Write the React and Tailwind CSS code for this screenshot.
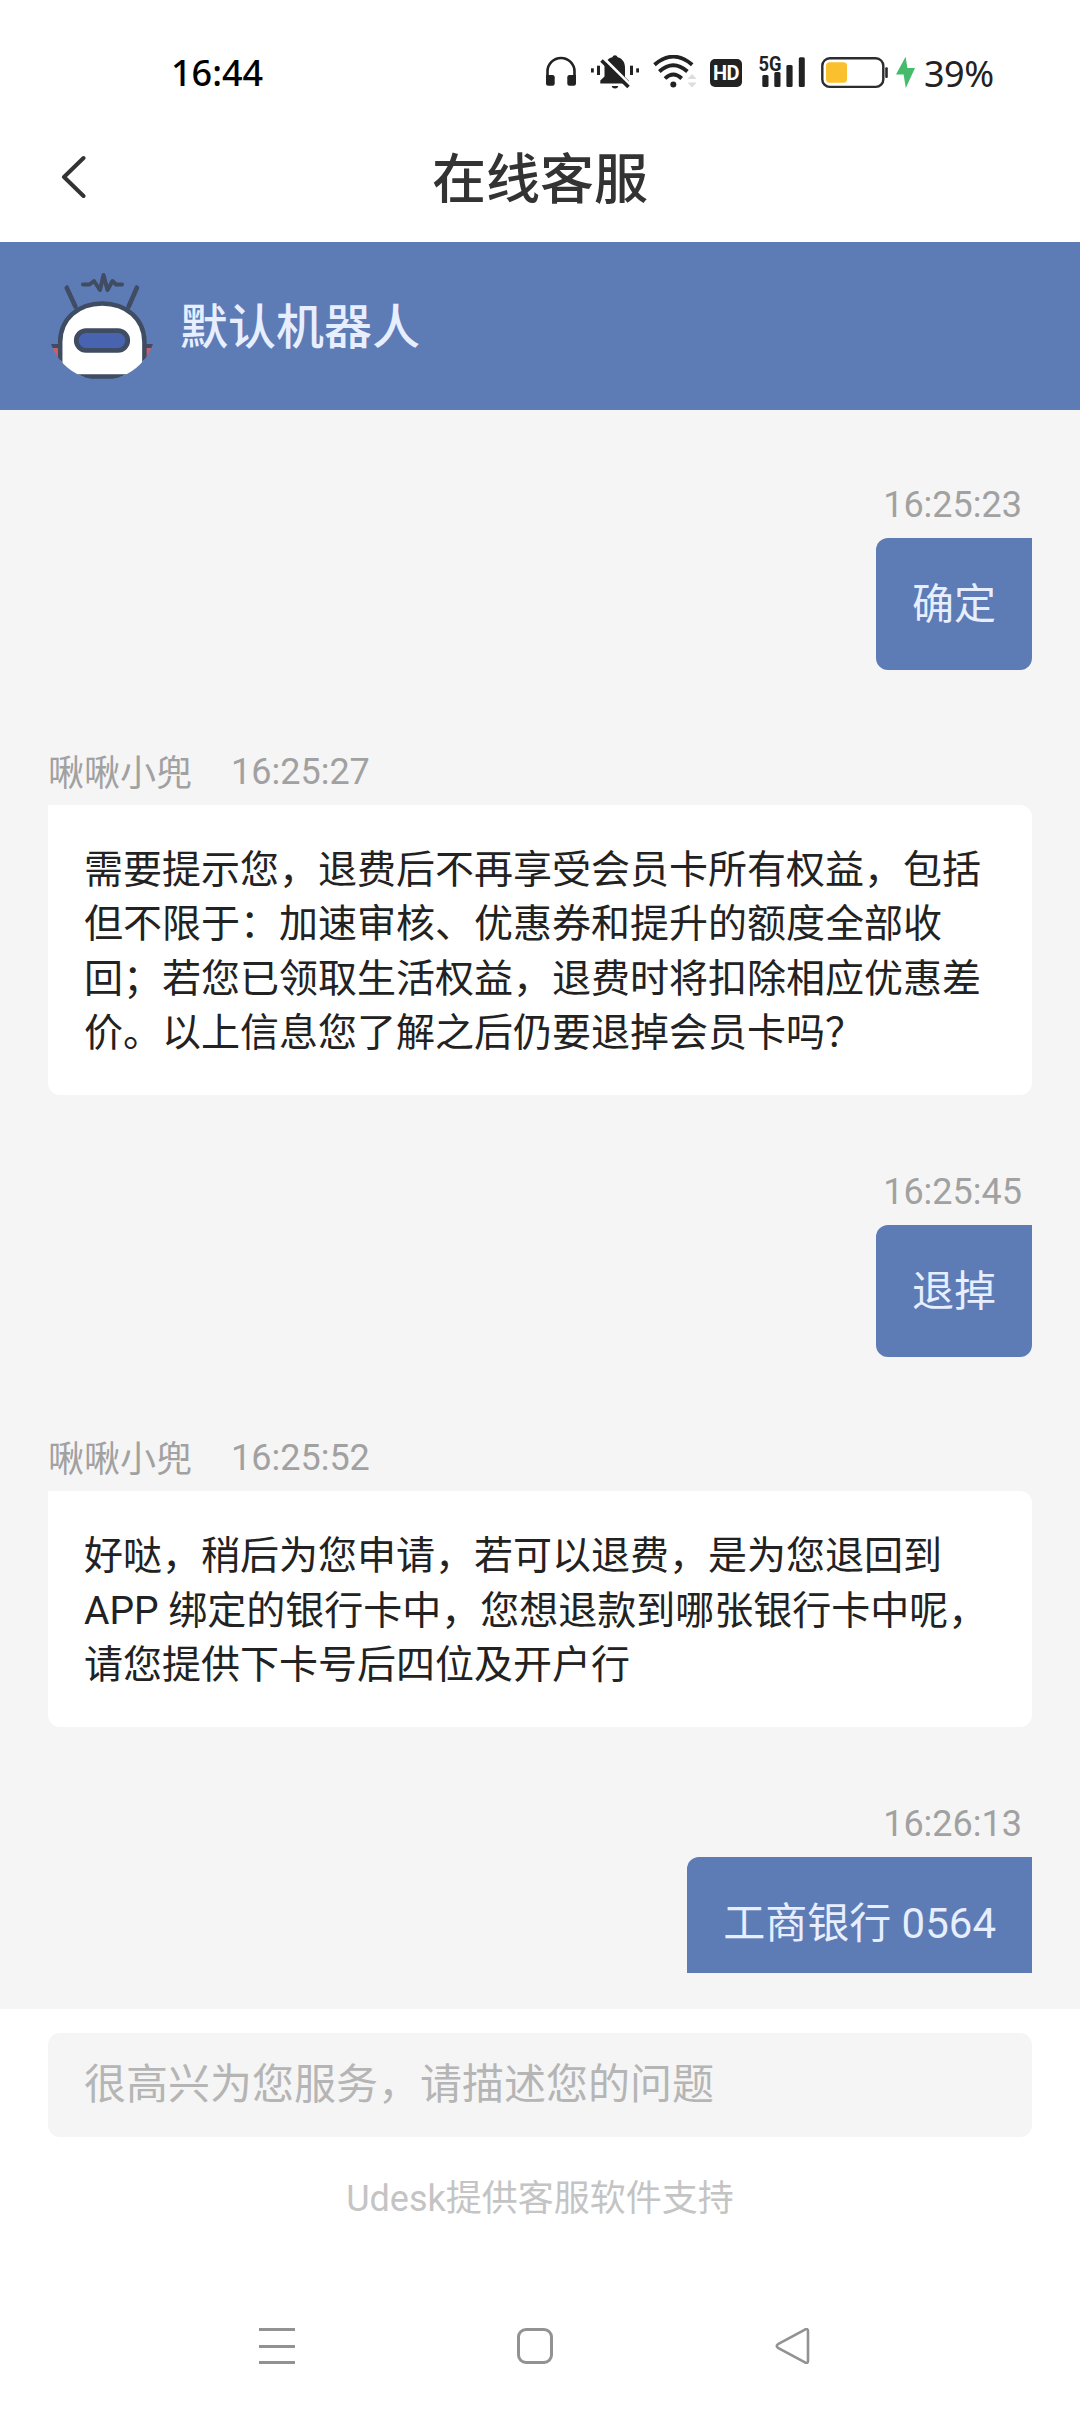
const messages = [
  { id: 1, from: 'me', time: '16:25:23', text: '确定' },
  {
    id: 2,
    from: 'agent',
    name: '啾啾小兜',
    time: '16:25:27',
    text: '需要提示您，退费后不再享受会员卡所有权益，包括但不限于：加速审核、优惠券和提升的额度全部收回；若您已领取生活权益，退费时将扣除相应优惠差价。以上信息您了解之后仍要退掉会员卡吗？',
  },
  { id: 3, from: 'me', time: '16:25:45', text: '退掉' },
  {
    id: 4,
    from: 'agent',
    name: '啾啾小兜',
    time: '16:25:52',
    text: '好哒，稍后为您申请，若可以退费，是为您退回到 APP 绑定的银行卡中，您想退款到哪张银行卡中呢，请您提供下卡号后四位及开户行',
  },
  { id: 5, from: 'me', time: '16:26:13', text: '工商银行 0564' },
];

const HeadphoneIcon = () => (
  <svg className="w-[30px] h-[36px] shrink-0" viewBox="0 0 30 36" fill="#222">
    <path d="M1.5 23V16.5a13.5 13.5 0 0 1 27 0V23" fill="none" stroke="#222" strokeWidth="2.6" />
    <path d="M0 20h6.5a2.2 2.2 0 0 1 2.2 2.2v6.4a2.2 2.2 0 0 1-2.2 2.2H2.2A2.2 2.2 0 0 1 0 28.6z" />
    <path d="M30 20h-6.5a2.2 2.2 0 0 0-2.2 2.2v6.4a2.2 2.2 0 0 0 2.2 2.2h4.3a2.2 2.2 0 0 0 2.2-2.2z" />
  </svg>
);

const MutedBellIcon = () => (
  <svg className="ml-[15px] w-[48px] h-[36px] shrink-0" viewBox="0 0 48 36" fill="#222">
    <rect x="0" y="13.3" width="2.8" height="4.2" />
    <rect x="6" y="10.7" width="3" height="9.3" />
    <rect x="39" y="10.7" width="3" height="9.3" />
    <rect x="45.2" y="13.3" width="2.8" height="4.2" />
    <path d="M24 .2c1.4 0 2.2.9 2.6 2C31.5 3.3 34 7.4 34 12.5V22l4 4v2.6H9.3v-3.1l4.200-4v-9c0-5.100 3-9.200 7.900-10.300.4-1.100 1.200-2 2.600-2z" />
    <path d="M20.8 31h6.4a3.2 2.4 0 0 1-6.4 0z" />
    <path d="M12.500 3l28 28" stroke="#fff" strokeWidth="3" />
    <path d="M10.500 5.500l27 26.500" stroke="#222" strokeWidth="3.600" />
  </svg>
);

const WifiIcon = () => (
  <svg className="ml-[14px] w-[44px] h-[36px] shrink-0" viewBox="0 0 44 36" fill="none">
    <g stroke="#222" strokeWidth="3.8">
      <path d="M1.5 9.8Q20.3-6.5 39.2 9.8" />
      <path d="M6.3 16.5Q20.3 4 34.4 16.5" />
      <path d="M12 23.5Q20.3 15.5 28.7 23.5" />
    </g>
    <circle cx="20.3" cy="29.5" r="3" fill="#222" />
    <path d="M34.500 24l4.600-5 4.600 5zM34.500 27.500l4.600 5 4.600-5z" fill="#ddd" />
  </svg>
);

const SignalIcon = () => (
  <svg className="ml-[17px] w-[47px] h-[36px] shrink-0 overflow-visible" viewBox="0 0 47 36" fill="#222">
    <text x="-0.5" y="15.5" textLength="23" lengthAdjust="spacingAndGlyphs" className="text-[21px] font-bold">
      5G
    </text>
    <rect x="3.3" y="20" width="6.2" height="12" rx="1.5" />
    <rect x="15.3" y="17" width="6.2" height="15" rx="1.5" />
    <rect x="27.4" y="10" width="6.2" height="22" rx="1.5" />
    <rect x="39.8" y="2.3" width="6" height="29.7" rx="1.5" />
  </svg>
);

const BatteryIcon = () => (
  <svg className="ml-[15px] w-[67px] h-[36px] shrink-0" viewBox="0 0 67 36">
    <rect x="1.3" y="3.3" width="61" height="28.6" rx="7.5" fill="none" stroke="#2b2b30" strokeWidth="2.4" />
    <rect x="5" y="7.3" width="21" height="20.4" rx="3.5" fill="#fbc02d" />
    <rect x="64.2" y="12.3" width="2.6" height="10.6" rx="1" fill="#2b2b30" />
  </svg>
);

const BoltIcon = () => (
  <svg className="ml-[8px] w-[19px] h-[36px] shrink-0" viewBox="0 0 19 36">
    <path d="M9.6 1.7L0 19.5h7.6L9.800 32.900 19 13h-7.600z" fill="#45bb6b" />
  </svg>
);

const RobotAvatar = () => (
  <svg className="w-[108px] h-[108px] rounded-full shrink-0" viewBox="0 0 108 108" fill="none">
    <g stroke="#3f4c62" strokeWidth="4.6" strokeLinecap="round" strokeLinejoin="round">
      <path d="M18.6 15.5l8.800 19M89 15.500l-8.300 19" />
      <path d="M35 12.500h6.500l4.500-3.500 6 9 3.500-15 4 15 5-9 3.500 3.500h6" strokeWidth="4" />
    </g>
    <path d="M5 76h6v14l-7-9zM104 76h-7v14l7-9z" fill="#c9606b" />
    <path d="M2 74h10M97 74h9" stroke="#3f4c62" strokeWidth="4" />
    <path
      d="M12.2 104.5V70c0-23 18-38.500 42-38.500S96.400 47 96.400 70v34.500z"
      fill="#fff"
      stroke="#3f4c62"
      strokeWidth="4.5"
    />
    <rect x="28.3" y="58.7" width="51.4" height="19.6" rx="9.8" fill="#4864b0" stroke="#3f4c62" strokeWidth="4.8" />
  </svg>
);

const StatusBar = () => (
  <div className="flex items-center h-[112px] pt-[34px] shrink-0">
    <div className="w-[546px] pl-[171px] font-['Noto_Sans'] font-medium text-[36px] leading-none text-black">16:44</div>
    <HeadphoneIcon />
    <MutedBellIcon />
    <WifiIcon />
    <div className="ml-[13px] w-8 h-7 rounded-[5px] bg-[#222] flex items-center justify-center text-white text-[20px] leading-none font-bold tracking-[-0.5px]">
      HD
    </div>
    <SignalIcon />
    <BatteryIcon />
    <BoltIcon />
    <div className="ml-[9px] pt-[2px] font-['Noto_Sans'] text-[36px] leading-none tracking-[-0.5px] text-[#222]">39%</div>
  </div>
);

const Message = ({ message }) => {
  if (message.from === 'me') {
    return (
      <div className="flex flex-col items-end">
        <div className="h-[55px] pr-[10px] text-[36px] leading-[44px] text-[#a1a1a1]">{message.time}</div>
        <div className="px-9 pt-[37px] pb-[35px] text-[42px] leading-[60px] rounded-xl rounded-tr-none bg-[#5d7bb5] text-[#e6eeff]">
          {message.text}
        </div>
      </div>
    );
  }

  return (
    <div>
      <div className="flex h-[60px] gap-[39px] text-[36px] leading-[54px] text-[#a1a1a1]">
        <span className="pt-[2px]">{message.name}</span>
        <span>{message.time}</span>
      </div>
      <div className="px-9 pt-[38px] pb-[34px] text-[39px] leading-[54.6px] rounded-xl rounded-tl-none bg-white text-[#222]">
        {message.text}
      </div>
    </div>
  );
};

const App = () => {
  return (
    <div
      lang="zh-CN"
      className="w-[1080px] h-[2412px] flex flex-col overflow-hidden bg-white font-['Roboto','Noto_Sans_CJK_SC',sans-serif]"
    >
      <StatusBar />

      {/* Title bar */}
      <div className="grid grid-cols-3 items-center h-[130px] px-[60px] shrink-0">
        <svg className="w-[26px] h-[44px]" viewBox="0 0 26 44" fill="none">
          <path d="M23.500 3L4 22l19.500 19" stroke="#333" strokeWidth="4" strokeLinecap="round" strokeLinejoin="round" />
        </svg>
        <h1 className="pt-[8px] text-[54px] leading-none font-medium text-center text-[#333]">在线客服</h1>
      </div>

      {/* Robot header */}
      <div className="flex items-center h-[168px] pl-12 gap-6 shrink-0 bg-[#5d7bb5]">
        <RobotAvatar />
        <span className="pt-[4px] text-[48px] leading-none font-medium text-[#e6eeff]">默认机器人</span>
      </div>

      {/* Chat */}
      <div className="h-[1599px] px-12 pb-9 shrink-0 bg-[#f5f5f5]">
        <div className="h-full pt-[73px] overflow-hidden flex flex-col gap-[74.6px]">
          {messages.map((message) => (
            <Message key={message.id} message={message} />
          ))}
        </div>
      </div>

      {/* Input */}
      <div className="px-12 pt-6 shrink-0">
        <div className="h-[104px] px-9 rounded-xl bg-[#f5f5f5] text-[42px] leading-[103px] text-[#b5b5b5]">
          很高兴为您服务，请描述您的问题
        </div>
        <p className="mt-[35px] text-center text-[36px] leading-[54px] text-[#c4c4c4]">Udesk提供客服软件支持</p>
      </div>

      {/* System navigation */}
      <div className="mt-auto h-[132px] flex items-center pl-[259px] gap-[222px] shrink-0">
        <div className="w-9 h-9 flex flex-col justify-between">
          <div className="h-[3px] bg-[#929292]"></div>
          <div className="h-[3px] bg-[#929292]"></div>
          <div className="h-[3px] bg-[#929292]"></div>
        </div>
        <div className="w-9 h-9 rounded-[9px] border-3 border-[#929292]"></div>
        <svg className="w-9 h-9" viewBox="0 0 36 36" fill="none">
          <path
            d="M3 16.200L29.500 1.800q3.500-2 3.500 1.500v29.400q0 3.500-3.500 1.500L3 19.800q-2.500-1.800 0-3.600z"
            stroke="#929292"
            strokeWidth="2.6"
            strokeLinejoin="round"
          />
        </svg>
      </div>
    </div>
  );
};

export default App;
